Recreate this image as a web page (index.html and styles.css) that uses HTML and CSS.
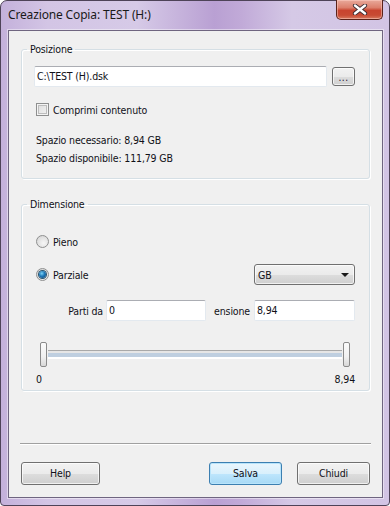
FILE: index.html
```html
<!DOCTYPE html>
<html lang="it">
<head>
<meta charset="utf-8">
<title>Creazione Copia</title>
<link rel="stylesheet" href="styles.css">
</head>
<body>
<div class="window">
  <div class="titlebar">
    <span class="title">Creazione Copia: TEST (H:)</span>
    <div class="close">
      <svg width="16" height="11" viewBox="0 0 16 11">
        <path d="M3 1.5 L13 9.5 M13 1.5 L3 9.5" stroke="#3a2a30" stroke-width="4.2" stroke-linecap="round" fill="none"/>
        <path d="M3 1.5 L13 9.5 M13 1.5 L3 9.5" stroke="#ffffff" stroke-width="2.4" stroke-linecap="round" fill="none"/>
      </svg>
    </div>
  </div>
  <div class="client">
    <fieldset class="group group-pos">
      <legend>Posizione</legend>
      <div class="inner">
        <div class="path-row">
          <div class="textbox path">C:\TEST (H).dsk</div>
          <div class="button browse">...</div>
        </div>
        <div class="check-row">
          <span class="checkbox"></span>
          <span>Comprimi contenuto</span>
        </div>
        <div class="info first">Spazio necessario: 8,94 GB</div>
        <div class="info">Spazio disponibile: 111,79 GB</div>
      </div>
    </fieldset>

    <fieldset class="group group-dim">
      <legend>Dimensione</legend>
      <div class="inner">
        <div class="radio-row pieno">
          <span class="radio"></span>
          <span>Pieno</span>
        </div>
        <div class="radio-row parziale">
          <span class="radio checked"><span class="dot"></span></span>
          <span>Parziale</span>
          <div class="combo"><span>GB</span><span class="arrow"></span></div>
        </div>
        <div class="range-row">
          <span class="lbl lbl-from">Parti da</span>
          <div class="textbox from">0</div>
          <span class="lbl lbl-size">ensione</span>
          <div class="textbox size">8,94</div>
        </div>
        <div class="slider">
          <span class="thumb"></span>
          <span class="track"></span>
          <span class="thumb"></span>
        </div>
        <div class="scale">
          <span>0</span>
          <span>8,94</span>
        </div>
      </div>
    </fieldset>

    <div class="spacer"></div>
    <div class="separator"></div>
    <div class="buttons">
      <div class="button help">Help</div>
      <div class="button salva default">Salva</div>
      <div class="button chiudi">Chiudi</div>
    </div>
  </div>
</div>
</body>
</html>
```
FILE: styles.css
```css
html, body {
  margin: 0;
  padding: 0;
  width: 390px;
  height: 506px;
  overflow: hidden;
  background: #ffffff;
}

body {
  font-family: "DejaVu Sans Condensed", "DejaVu Sans", sans-serif;
  font-size: 10.5px;
  letter-spacing: -0.15px;
  color: #101018;
}

.window {
  box-sizing: border-box;
  width: 390px;
  height: 506px;
  display: flex;
  flex-direction: column;
  border: 1px solid #4e4358;
  border-radius: 7px 7px 4px 4px;
  background: linear-gradient(to right, #c4b1db 0%, #d3c5e5 12%, #d6cae7 35%, #b9a0d3 55%, #c1aad8 62%, #d5c9e6 75%, #d2c4e4 100%);
}

.titlebar {
  height: 29px;
  display: flex;
  justify-content: space-between;
  align-items: flex-start;
  padding: 0 6px 0 7px;
}

.title {
  font-family: "Noto Sans", "DejaVu Sans", sans-serif;
  font-size: 12px;
  line-height: 16px;
  margin-top: 6px;
  color: #1a1a1a;
  letter-spacing: -0.15px;
}

.close {
  box-sizing: border-box;
  width: 47px;
  height: 20px;
  margin-top: -1px;
  border: 1px solid #5a2219;
  border-top: none;
  border-radius: 0 0 5px 5px;
  background: linear-gradient(to bottom, #e9a99b 0%, #dc7f6c 40%, #c8442f 55%, #c84a33 80%, #d77a5f 100%);
  box-shadow: inset 0 0 0 1px rgba(255, 210, 200, 0.5);
  display: flex;
  align-items: center;
  justify-content: center;
}

.client {
  box-sizing: border-box;
  height: 468px;
  margin: 0 6px 0 7px;
  border: 1px solid #6f6580;
  background: #f0f0f0;
  display: flex;
  flex-direction: column;
  padding: 11px 12px 12px 12px;
  box-shadow: 0 0 0 1px rgba(255, 255, 255, 0.45);
}

.group {
  margin: 0;
  padding: 0 14px 0 5px;
  border: 1px solid #d5dfe5;
  border-radius: 3px;
  box-shadow: inset 1px 1px 0 #ffffff, 1px 1px 0 #ffffff;
}

.group legend {
  padding: 0 3px;
  line-height: 14px;
}

.inner {
  padding-left: 8px;
}

.group-pos .inner {
  padding-top: 10px;
  padding-bottom: 11px;
}

.group-dim {
  margin-top: 18px;
}

.group-dim .inner {
  padding-top: 24px;
  padding-bottom: 4px;
}

.path-row {
  display: flex;
  align-items: center;
  gap: 5px;
}

.textbox {
  box-sizing: border-box;
  height: 21px;
  background: #ffffff;
  border: 1px solid #e3e9ef;
  border-top-color: #abadb3;
  border-radius: 2px;
  padding-left: 2px;
  line-height: 19px;
  white-space: nowrap;
}

.path {
  flex: 1;
  margin-left: -1px;
}

.button {
  box-sizing: border-box;
  border: 1px solid #707070;
  border-radius: 3px;
  background: linear-gradient(to bottom, #f2f2f2 0%, #ebebeb 50%, #dddddd 51%, #cfcfcf 100%);
  box-shadow: inset 0 0 0 1px rgba(255, 255, 255, 0.7);
  text-align: center;
}

.browse {
  width: 23px;
  height: 19px;
  line-height: 20px;
  font-size: 10px;
  letter-spacing: 0.5px;
  color: #1a1030;
}

.check-row {
  display: flex;
  align-items: center;
  gap: 4px;
  margin-top: 16px;
  height: 13px;
  margin-left: 1px;
}

.checkbox {
  box-sizing: border-box;
  width: 13px;
  height: 13px;
  border: 1px solid #8e8f8f;
  background: linear-gradient(135deg, #dcdcdc 0%, #f4f4f4 100%);
  box-shadow: inset 0 0 0 1px #f4f4f4, inset 0 0 0 2px #bdbdbd;
}

.info {
  line-height: 18px;
  margin-left: 1px;
}

.info.first {
  margin-top: 15px;
}

.radio-row {
  display: flex;
  align-items: center;
  gap: 4px;
  margin-left: 1px;
}

.pieno {
  height: 13px;
}

.parziale {
  margin-top: 16px;
  height: 21px;
}

.radio {
  box-sizing: border-box;
  width: 13px;
  height: 13px;
  border-radius: 50%;
  border: 1px solid #8e8f8f;
  background: radial-gradient(circle at 60% 65%, #f6f6f6 0%, #e2e2e2 55%, #cfcfcf 100%);
  display: flex;
  align-items: center;
  justify-content: center;
}

.radio .dot {
  width: 7px;
  height: 7px;
  border-radius: 50%;
  background: radial-gradient(circle at 40% 35%, #7cd2f5 0%, #1e78b8 45%, #0f3f6e 100%);
  box-shadow: 0 0 0 1px #27536e;
}

.combo {
  box-sizing: border-box;
  margin-left: auto;
  width: 101px;
  height: 21px;
  border: 1px solid #707070;
  border-radius: 3px;
  background: linear-gradient(to bottom, #f2f2f2 0%, #ebebeb 50%, #dddddd 51%, #cfcfcf 100%);
  box-shadow: inset 0 0 0 1px rgba(255, 255, 255, 0.7);
  display: flex;
  align-items: center;
  justify-content: space-between;
  padding: 0 5px 0 3px;
}

.arrow {
  width: 0;
  height: 0;
  border-left: 4px solid transparent;
  border-right: 4px solid transparent;
  border-top: 4px solid #1a1a1a;
  margin-top: 1px;
}

.range-row {
  display: flex;
  align-items: center;
  margin-top: 15px;
}

.lbl {
  box-sizing: border-box;
  text-align: right;
  white-space: nowrap;
}

.lbl-from {
  width: 71px;
  padding-right: 3px;
}

.from {
  width: 100px;
}

.lbl-size {
  width: 48px;
  padding-right: 4px;
}

.size {
  flex: 1;
}

.slider {
  display: flex;
  align-items: center;
  margin-top: 21px;
  padding: 0 5px;
  height: 25px;
}

.thumb {
  box-sizing: border-box;
  width: 7px;
  height: 25px;
  border: 1px solid #8a8a8a;
  border-radius: 2px;
  background: linear-gradient(to bottom, #fbfbfb 0%, #f0f0f0 60%, #d8d8d8 100%);
}

.track {
  flex: 1;
  height: 9px;
  margin: 0 1px;
  background: linear-gradient(to bottom, #a9a9a9 0px, #a9a9a9 1px, #e6e6e6 1px, #e6e6e6 3px, #bfcfe0 3px, #bfcfe0 7px, #ffffff 7px, #ffffff 9px);
}

.scale {
  display: flex;
  justify-content: space-between;
  line-height: 14px;
  margin-top: 5px;
  padding-left: 1px;
}

.spacer {
  flex: 1;
}

.separator {
  height: 1px;
  margin: 0 -1px 0 -1px;
  background: #a0a0a0;
  border-bottom: 1px solid #ffffff;
}

.buttons {
  display: flex;
  margin-top: 17px;
  gap: 15px;
}

.buttons .button {
  height: 23px;
  line-height: 21px;
  width: 73px;
}

.help {
  width: 79px !important;
  margin-right: auto;
}

.default {
  border-color: #3c7fb1;
  background: linear-gradient(to bottom, #eaf6fd 0%, #d9f0fc 50%, #bee6fd 51%, #a7d9f5 100%);
  box-shadow: inset 0 0 0 1px #b8e4fb;
}
```
